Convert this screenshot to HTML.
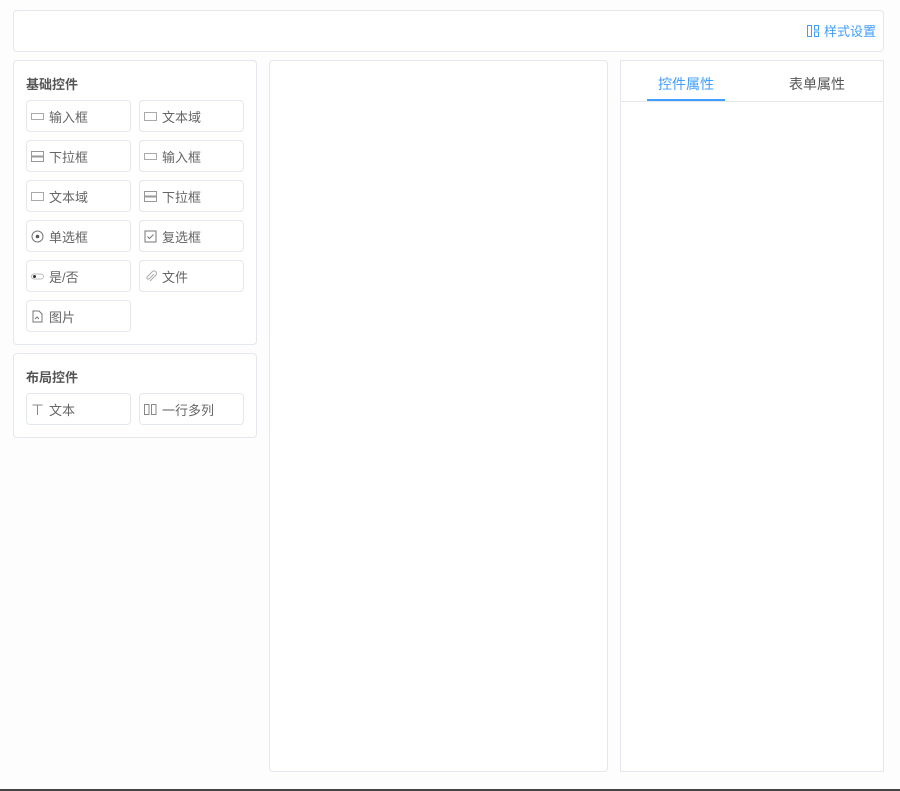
<!DOCTYPE html>
<html><head><meta charset="utf-8"><style>
*{box-sizing:border-box;margin:0;padding:0}
body{width:900px;height:791px;background:#fdfdfd;position:relative;overflow:hidden;font-family:"Liberation Sans","Noto Sans CJK SC",sans-serif;color:#606266;font-size:13px}
.box{position:absolute;border:1px solid #e4e7ed;border-radius:4px;background:#fff}
.t{position:absolute;left:12px;font-size:13px;font-weight:bold;color:#555}
.b{position:absolute;width:105px;height:32px;border:1px solid #e4e7ed;border-radius:4px;background:#fff;display:flex;align-items:center;padding-left:4px;font-size:13px;color:#666}
.b svg{width:13px;height:13px;margin-right:5px;flex:none}
</style></head><body>
<div class="box" style="left:13px;top:10px;width:871px;height:42px">
<div style="position:absolute;right:7px;top:10px;color:#409eff;font-size:13px;display:flex;align-items:center"><svg width="14" height="14" viewBox="0 0 14 14" fill="none" stroke="#409eff" stroke-width="1"><rect x="1.5" y="1.5" width="4" height="11"/><rect x="8.5" y="1.5" width="4" height="4.5"/><rect x="8.5" y="8" width="4" height="4.5"/></svg>&nbsp;样式设置</div>
</div>
<div class="box" style="left:13px;top:60px;width:244px;height:285px">
<div class="t" style="top:13px">基础控件</div>
</div>
<div class="box" style="left:13px;top:353px;width:244px;height:85px">
<div class="t" style="top:13px">布局控件</div>
</div>
<div class="box" style="left:269px;top:60px;width:339px;height:712px"></div>
<div class="box" style="left:620px;top:60px;width:264px;height:712px;border-radius:0">
<div style="position:absolute;left:0;right:0;top:40px;height:1px;background:#e4e7ed"></div>
<div style="position:absolute;left:26px;width:78px;top:38px;height:2px;background:#409eff"></div>
<div style="position:absolute;left:26px;width:78px;top:13px;text-align:center;color:#409eff;font-size:14px">控件属性</div>
<div style="position:absolute;left:157px;width:78px;top:13px;text-align:center;color:#555;font-size:14px">表单属性</div>
</div>
<div style="position:absolute;left:0;right:0;top:789px;height:2px;background:#444"></div>

<div class="b" style="left:26px;top:100px"><svg viewBox="0 0 13 13" fill="none" stroke="#aaa"><rect x="0.5" y="3.5" width="12" height="6"/></svg>输入框</div>
<div class="b" style="left:139px;top:100px"><svg viewBox="0 0 13 13" fill="none" stroke="#aaa"><rect x="0.5" y="2.5" width="12" height="8"/></svg>文本域</div>
<div class="b" style="left:26px;top:140px"><svg viewBox="0 0 13 13" fill="none" stroke="#999"><rect x="0.5" y="1.5" width="12" height="4.5"/><rect x="0.5" y="7" width="12" height="4.5"/></svg>下拉框</div>
<div class="b" style="left:139px;top:140px"><svg viewBox="0 0 13 13" fill="none" stroke="#aaa"><rect x="0.5" y="3.5" width="12" height="6"/></svg>输入框</div>
<div class="b" style="left:26px;top:180px"><svg viewBox="0 0 13 13" fill="none" stroke="#aaa"><rect x="0.5" y="2.5" width="12" height="8"/></svg>文本域</div>
<div class="b" style="left:139px;top:180px"><svg viewBox="0 0 13 13" fill="none" stroke="#999"><rect x="0.5" y="1.5" width="12" height="4.5"/><rect x="0.5" y="7" width="12" height="4.5"/></svg>下拉框</div>
<div class="b" style="left:26px;top:220px"><svg viewBox="0 0 13 13" fill="none" stroke="#777"><circle cx="6.5" cy="6.5" r="5.5"/><circle cx="6.5" cy="6.5" r="1.8" fill="#555" stroke="none"/></svg>单选框</div>
<div class="b" style="left:139px;top:220px"><svg viewBox="0 0 13 13" fill="none" stroke="#777"><rect x="1" y="1" width="11" height="11"/><path d="M3.5 6.5l2 2 4-4"/></svg>复选框</div>
<div class="b" style="left:26px;top:260px"><svg viewBox="0 0 13 13" fill="none" stroke="#bbb"><rect x="0.5" y="4" width="12" height="5" rx="2.5"/><circle cx="3.5" cy="6.5" r="1.5" fill="#333" stroke="none"/></svg>是/否</div>
<div class="b" style="left:139px;top:260px"><svg viewBox="0 0 13 13" fill="none" stroke="#aaa"><path d="M10 4L5 9a1.5 1.5 0 01-2-2l5.5-5.5a2.5 2.5 0 013.5 3.5L6 11"/></svg>文件</div>
<div class="b" style="left:26px;top:300px"><svg viewBox="0 0 13 13" fill="none" stroke="#777"><path d="M2 1h6l3 3v8H2z"/><path d="M4 9l2-2 2 2"/></svg>图片</div>
<div class="b" style="left:26px;top:393px"><svg viewBox="0 0 13 13" fill="none" stroke="#888"><path d="M1.5 2h10M6.5 2v10"/></svg>文本</div>
<div class="b" style="left:139px;top:393px"><svg viewBox="0 0 13 13" fill="none" stroke="#888"><rect x="0.5" y="1.5" width="4.5" height="10"/><rect x="7.5" y="1.5" width="4.5" height="10"/></svg>一行多列</div>
</body></html>
